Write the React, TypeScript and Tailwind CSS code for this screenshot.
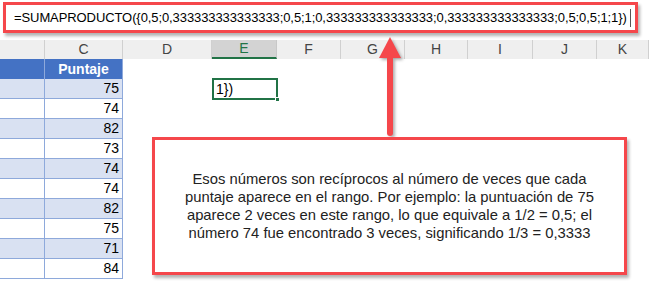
const formula =
  "=SUMAPRODUCTO({0,5;0,333333333333333;0,5;1;0,333333333333333;0,333333333333333;0,5;0,5;1;1})";

const cols = [
  { key: "B", w: "w-[45px]" },
  { key: "C", w: "w-[78px]" },
  { key: "D", w: "w-[89px]" },
  { key: "E", w: "w-[65px]" },
  { key: "F", w: "w-[64px]" },
  { key: "G", w: "w-[64px]" },
  { key: "H", w: "w-[63px]" },
  { key: "I", w: "w-[65px]" },
  { key: "J", w: "w-[64px]" },
  { key: "K", w: "w-[52px]" },
];

const scores = [75, 74, 82, 73, 74, 74, 82, 75, 71, 84];

function ColumnHeaders() {
  return (
    <div className="flex h-[19px] bg-[#efefef] text-[14px] text-[#444]">
      {cols.map((c) =>
        c.key === "E" ? (
          <div
            key={c.key}
            className={`${c.w} shrink-0 flex items-center justify-center bg-[#d3d3d3] border-r border-[#c8c8c8] border-b-2 border-b-[#217346] text-[#217346]`}
          >
            {c.key}
          </div>
        ) : (
          <div
            key={c.key}
            className={`${c.w} shrink-0 flex items-center justify-center border-r border-[#d0d0d0]`}
          >
            {c.key === "B" ? "" : c.key}
          </div>
        )
      )}
    </div>
  );
}

function Row({ value, index }: { value: number; index: number }) {
  const shaded = index % 2 === 0;
  const bg = shaded ? "bg-[#d9e1f2]" : "bg-white";
  return (
    <div className="flex h-[20px]">
      <div className={`w-[45px] shrink-0 ${bg} border-b border-r border-[#8ea9db]`} />
      <div
        className={`w-[78px] shrink-0 ${bg} border-b border-r border-[#8ea9db] flex items-center justify-end pr-[3px] text-[14px] text-black`}
      >
        {value}
      </div>
      <div className="w-[89px] shrink-0" />
      <div className="w-[65px] shrink-0 relative">
        {index === 0 && (
          <div className="absolute left-0 top-[-1px] w-[66px] h-[22px] border-2 border-[#217346] flex items-center pl-[2px] text-[14px] text-black">
            {"1})"}
            <div className="absolute right-[-4px] bottom-[-4px] w-[5px] h-[5px] bg-[#217346] border border-white" />
          </div>
        )}
      </div>
    </div>
  );
}

function Arrow() {
  return (
    <svg
      className="absolute left-[374px] top-[33px]"
      width="32"
      height="106"
      viewBox="0 0 32 106"
      style={{ filter: "drop-shadow(2px 2px 1.5px rgba(0,0,0,0.3))" }}
    >
      <line x1="16" y1="100" x2="16" y2="22" stroke="#f5474b" strokeWidth="6" strokeLinecap="round" />
      <polygon points="5,25 27,25 16,4" fill="#f5474b" />
    </svg>
  );
}

export default function App() {
  return (
    <div className="relative w-[649px] h-[291px] overflow-hidden bg-white font-['Liberation_Sans',Arial,sans-serif]">
      <div className="h-[40px] pt-[2px] pl-[3px]">
        <div className="w-[635px] h-[31px] border-[3px] border-[#f5474b] bg-white shadow-[2px_3px_3px_rgba(0,0,0,0.3)] flex items-center pl-[8px] text-[13px] tracking-[-0.09px] text-black whitespace-nowrap overflow-hidden">
          <span>{formula}</span>
          <span className="ml-[3px] w-px h-[18px] bg-[#555]" />
        </div>
      </div>

      <ColumnHeaders />

      <div className="flex h-[20px]">
        <div className="w-[45px] shrink-0 bg-[#4472c4] border-r border-[#8ea9db]" />
        <div className="w-[78px] shrink-0 bg-[#4472c4] border-r border-[#8ea9db] flex items-center justify-center text-[14px] font-bold text-white">
          Puntaje
        </div>
      </div>

      {scores.map((s, i) => (
        <Row key={i} value={s} index={i} />
      ))}

      <Arrow />

      <div className="absolute left-[152px] top-[137px] w-[475px] h-[138px] border-[3px] border-[#f5474b] bg-white shadow-[2px_3px_3px_rgba(0,0,0,0.3)] flex items-center justify-center text-center text-[14.8px] leading-[18px] text-[#222]">
        <p>
          Esos números son recíprocos al número de veces que cada
          <br />
          puntaje aparece en el rango. Por ejemplo: la puntuación de 75
          <br />
          aparece 2 veces en este rango, lo que equivale a 1/2 = 0,5; el
          <br />
          número 74 fue encontrado 3 veces, significando 1/3 = 0,3333
        </p>
      </div>
    </div>
  );
}
